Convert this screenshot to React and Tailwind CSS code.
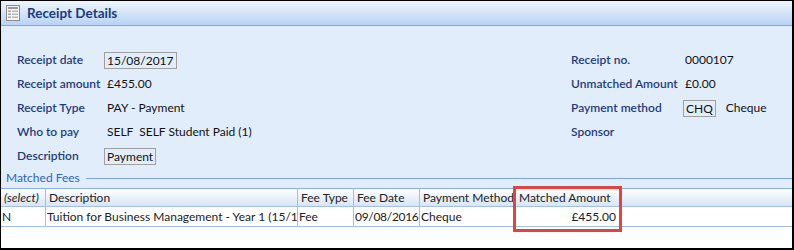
import React from 'react';

const font = { fontFamily: 'Lato, "Open Sans", sans-serif' };

function DocIcon() {
  return (
    <svg width="14" height="16" viewBox="0 0 14 16" className="shrink-0">
      <rect x="0.5" y="0.5" width="13" height="15" fill="#f4f4f4" stroke="#8a8a8a" />
      <rect x="2" y="2" width="10" height="2" fill="#9a9a9a" />
      <rect x="2" y="5.5" width="3" height="1.5" fill="#a8a8a8" />
      <rect x="6" y="5.5" width="6" height="1.5" fill="#b8b8b8" />
      <rect x="2" y="8.5" width="3" height="1.5" fill="#a8a8a8" />
      <rect x="6" y="8.5" width="6" height="1.5" fill="#b8b8b8" />
      <rect x="2" y="11.5" width="3" height="1.5" fill="#a8a8a8" />
      <rect x="6" y="11.5" width="6" height="1.5" fill="#b8b8b8" />
    </svg>
  );
}

function Label({ children, w }) {
  return <div className={`${w} shrink-0 whitespace-nowrap font-semibold text-[#1f3c7a]`}>{children}</div>;
}

function Boxed({ children }) {
  return <span className="border border-[#a0a0a0] px-[2px] leading-[15px]">{children}</span>;
}

const cols = [
  { key: 'select', title: '(select)', w: 'w-[45px]', italic: true },
  { key: 'desc', title: 'Description', w: 'w-[252px]' },
  { key: 'type', title: 'Fee Type', w: 'w-[56px]' },
  { key: 'date', title: 'Fee Date', w: 'w-[66px]' },
  { key: 'method', title: 'Payment Method', w: 'w-[96px]' },
  { key: 'amount', title: 'Matched Amount', w: 'w-[104px]' },
];

const row = {
  select: 'N',
  desc: 'Tuition for Business Management - Year 1 (15/16)',
  type: 'Fee',
  date: '09/08/2016',
  method: 'Cheque',
  amount: '£455.00',
};

export default function App() {
  return (
    <div className="w-[794px] h-[250px] bg-white" style={font}>
      <div className="relative w-full h-full border-t border-l border-b-2 border-r-2 border-black flex flex-col overflow-hidden">
        <div className="h-[25px] shrink-0 flex items-center gap-[7px] pl-[5px] bg-gradient-to-b from-[#eef5fd] to-[#b9d3f4] border-b border-[#7ea8dc]">
          <DocIcon />
          <span className="font-bold text-[13.5px] text-[#1b3b7a]">Receipt Details</span>
        </div>

        <div className="bg-[#e2edfb] shrink-0 pt-[22px] text-[12px] text-[#111] flex">
          <div className="pl-[16px] w-[570px] flex flex-col">
            <div className="h-[24px] flex items-center">
              <Label w="w-[87px]">Receipt date</Label>
              <Boxed>15/08/2017</Boxed>
            </div>
            <div className="h-[24px] flex items-center">
              <Label w="w-[87px]">Receipt amount</Label>
              <span className="pl-[3px]">£455.00</span>
            </div>
            <div className="h-[24px] flex items-center">
              <Label w="w-[87px]">Receipt Type</Label>
              <span className="pl-[3px]">PAY - Payment</span>
            </div>
            <div className="h-[24px] flex items-center">
              <Label w="w-[87px]">Who to pay</Label>
              <span className="pl-[3px] whitespace-pre">SELF  SELF Student Paid (1)</span>
            </div>
            <div className="h-[24px] flex items-center">
              <Label w="w-[87px]">Description</Label>
              <Boxed>Payment</Boxed>
            </div>
          </div>
          <div className="flex flex-col">
            <div className="h-[24px] flex items-center">
              <Label w="w-[112px]">Receipt no.</Label>
              <span className="pl-[2px]">0000107</span>
            </div>
            <div className="h-[24px] flex items-center">
              <Label w="w-[112px]">Unmatched Amount</Label>
              <span className="pl-[2px]">£0.00</span>
            </div>
            <div className="h-[24px] flex items-center">
              <Label w="w-[112px]">Payment method</Label>
              <Boxed>CHQ</Boxed>
              <span className="pl-[10px]">Cheque</span>
            </div>
            <div className="h-[24px] flex items-center">
              <Label w="w-[112px]">Sponsor</Label>
            </div>
          </div>
        </div>

        <div className="bg-[#e2edfb] shrink-0 h-[20px] flex items-center pl-[5px] gap-[6px]">
          <span className="text-[12px] text-[#2d64b8]">Matched Fees</span>
          <div className="flex-1 border-t border-[#7ea8dc] mt-[1px]"></div>
        </div>

        <div className="flex-1 bg-white text-[12px] text-[#222]">
          <div className="h-[18px] flex border-t border-[#8eb0dc] bg-gradient-to-b from-white to-[#d6e5f7]">
            {cols.map((c) => (
              <div key={c.key} className={`${c.w} shrink-0 border-r border-[#a6bfe0] pl-[3px] flex items-center whitespace-nowrap overflow-hidden ${c.italic ? 'italic' : ''}`}>
                {c.title}
              </div>
            ))}
          </div>
          <div className="h-[21px] flex border-t border-b border-[#a6bfe0]">
            {cols.map((c) => (
              <div key={c.key} className={`${c.w} shrink-0 border-r border-[#a6bfe0] flex items-center whitespace-nowrap overflow-hidden ${c.key === 'amount' ? 'justify-end pr-[3px]' : 'pl-[1px]'} ${c.key === 'date' ? 'tracking-[-0.3px]' : ''}`}>
                {row[c.key]}
              </div>
            ))}
          </div>
        </div>

        <div className="absolute left-[512px] top-[185px] w-[109px] h-[46px] border-[3px] border-[#e04440]"></div>
      </div>
    </div>
  );
}
